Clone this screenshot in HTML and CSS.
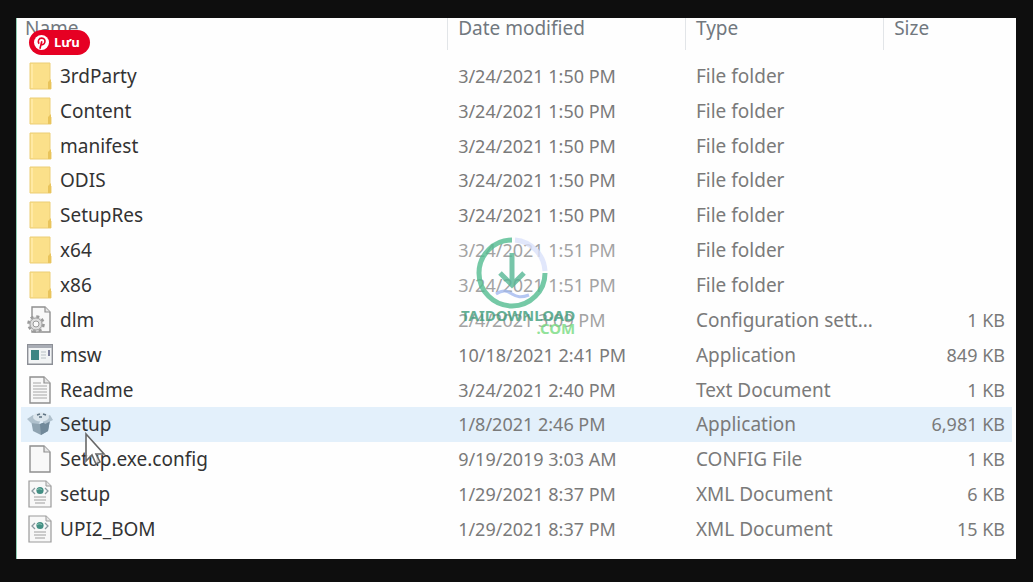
FILE: index.html
```
<!DOCTYPE html>
<html lang="en">
<head>
<meta charset="utf-8">
<title>File list</title>
<link rel="stylesheet" href="styles.css">
</head>
<body>
<svg class="defs" aria-hidden="true">
  <symbol id="folder" viewBox="0 0 26 28">
    <path d="M3 1h20v18l1 1v7H3z" fill="#fbe08a" stroke="#ecce76"/>
    <path d="M21 27v-7l3-3v10z" fill="#e9c45c"/>
    <path d="M4 2h2v24H4z" fill="#ffe9a3"/>
  </symbol>
  <symbol id="page" viewBox="0 0 26 28">
    <path d="M3 1h14l6 6v20H3z" fill="#f8f8f8" stroke="#8f8f8f" stroke-width="1.4"/>
    <path d="M17 1v6h6" fill="#e6e6e6" stroke="#8f8f8f" stroke-width="1.2"/>
  </symbol>
  <symbol id="text" viewBox="0 0 26 28">
    <use href="#page"/>
    <path d="M6 10h14M6 13h14M6 16h14M6 19h14M6 22h14M6 7h8" stroke="#a5a5a5" stroke-width="1.2"/>
  </symbol>
  <symbol id="config" viewBox="0 0 26 28">
    <path d="M5 1h13l5 5v20H5z" fill="#f8f8f8" stroke="#8f8f8f" stroke-width="1.4"/>
    <path d="M18 1v5h5" fill="#e6e6e6" stroke="#8f8f8f" stroke-width="1.2"/>
    <circle cx="9" cy="18" r="7.5" fill="#e2e2e2" stroke="#9a9a9a" stroke-width="2.600" stroke-dasharray="3 2.900"/>
    <circle cx="9" cy="18" r="6" fill="#dedede" stroke="#a2a2a2"/>
    <circle cx="9" cy="18" r="3" fill="#fafafa" stroke="#999"/>
  </symbol>
  <symbol id="app" viewBox="0 0 26 28">
    <path d="M.7 3.700h24.600v19.600H.7z" fill="#f2f4f5" stroke="#8c8f96" stroke-width="1.4"/>
    <path d="M1 4h24v3H1z" fill="#a9adb5"/>
    <path d="M4 9h8v10H4z" fill="#3d8583"/>
    <path d="M14 11h5M14 14h5M14 17h5" stroke="#b8c0c5" stroke-width="1.2"/>
    <path d="M21 9h2v6h-2z" fill="#7d809c"/>
  </symbol>
  <symbol id="setup" viewBox="0 0 26 28">
    <path d="M4 10l9 4 10-4-2 11-7 4-8-4z" fill="#8fa3b1"/>
    <path d="M13 14l10-4-2 11-7 4z" fill="#71899a"/>
    <path d="M0 9l6-4 8 4-2 5-8-1zM14 9l9-4 3 5-8 4z" fill="#b0c1cd"/>
    <ellipse cx="14" cy="7" rx="8" ry="4.500" fill="#dce6ed"/>
    <path d="M10 5l3-1M16 4l3 1M12 7h3" stroke="#5f7484" stroke-width="1.4"/>
  </symbol>
  <symbol id="xml" viewBox="0 0 26 28">
    <path d="M2 1h17l5 5v21H2z" fill="#f8f8f8" stroke="#9a9a9a" stroke-width="1.2"/>
    <path d="M19 1v5h5" fill="#e6e6e6" stroke="#9a9a9a"/>
    <path d="M8 8l-3 3 3 3M18 8l3 3-3 3" fill="none" stroke="#8a9aa0" stroke-width="1.3"/>
    <circle cx="13" cy="10.500" r="3.600" fill="#438f84"/>
    <path d="M10 10c2-2 4-1 5 0" fill="none" stroke="#9bd0bd"/>
    <path d="M7 17h12M7 20h12M8 23h10" stroke="#9d9d9d" stroke-width="1.200"/>
  </symbol>
</svg>

<main class="viewer">
  <div class="panel">
    <table class="files">
      <colgroup><col class="col-name"><col class="col-date"><col class="col-type"><col class="col-size"></colgroup>
      <thead>
        <tr><th scope="col"><span>Name</span></th><th scope="col"><span>Date modified</span></th><th scope="col"><span>Type</span></th><th scope="col"><span>Size</span></th></tr>
      </thead>
      <tbody>
        <tr><td><div class="name"><svg class="icon"><use href="#folder"/></svg>3rdParty</div></td><td>3/24/2021 1:50 PM</td><td>File folder</td><td></td></tr>
        <tr><td><div class="name"><svg class="icon"><use href="#folder"/></svg>Content</div></td><td>3/24/2021 1:50 PM</td><td>File folder</td><td></td></tr>
        <tr><td><div class="name"><svg class="icon"><use href="#folder"/></svg>manifest</div></td><td>3/24/2021 1:50 PM</td><td>File folder</td><td></td></tr>
        <tr><td><div class="name"><svg class="icon"><use href="#folder"/></svg>ODIS</div></td><td>3/24/2021 1:50 PM</td><td>File folder</td><td></td></tr>
        <tr><td><div class="name"><svg class="icon"><use href="#folder"/></svg>SetupRes</div></td><td>3/24/2021 1:50 PM</td><td>File folder</td><td></td></tr>
        <tr><td><div class="name"><svg class="icon"><use href="#folder"/></svg>x64</div></td><td class="faded">3/24/2021 1:51 PM</td><td>File folder</td><td></td></tr>
        <tr><td><div class="name"><svg class="icon"><use href="#folder"/></svg>x86</div></td><td class="faded">3/24/2021 1:51 PM</td><td>File folder</td><td></td></tr>
        <tr><td><div class="name"><svg class="icon"><use href="#config"/></svg>dlm</div></td><td class="faded">2/4/2021 3:09 PM</td><td>Configuration sett...</td><td>1 KB</td></tr>
        <tr><td><div class="name"><svg class="icon"><use href="#app"/></svg>msw</div></td><td>10/18/2021 2:41 PM</td><td>Application</td><td>849 KB</td></tr>
        <tr><td><div class="name"><svg class="icon"><use href="#text"/></svg>Readme</div></td><td>3/24/2021 2:40 PM</td><td>Text Document</td><td>1 KB</td></tr>
        <tr class="selected"><td><div class="name"><svg class="icon"><use href="#setup"/></svg>Setup</div></td><td>1/8/2021 2:46 PM</td><td>Application</td><td>6,981 KB</td></tr>
        <tr><td><div class="name"><svg class="icon"><use href="#page"/></svg>Setup.exe.config</div></td><td>9/19/2019 3:03 AM</td><td>CONFIG File</td><td>1 KB</td></tr>
        <tr><td><div class="name"><svg class="icon"><use href="#xml"/></svg>setup</div></td><td>1/29/2021 8:37 PM</td><td>XML Document</td><td>6 KB</td></tr>
        <tr><td><div class="name"><svg class="icon"><use href="#xml"/></svg>UPI2_BOM</div></td><td>1/29/2021 8:37 PM</td><td>XML Document</td><td>15 KB</td></tr>
      </tbody>
    </table>

    <button class="save" type="button">
      <svg class="save-logo" viewBox="0 0 24 24" aria-hidden="true"><circle cx="12" cy="12" r="12" fill="#fff"/><path d="M9.500 22l3-12M8 14C5.500 10 7.500 5 12.300 5c4.200 0 6 3.200 5 6.800-1 3.900-5 4.700-6.300 2.300" fill="none" stroke="#e60023" stroke-width="2.600"/></svg>
      Lưu
    </button>

    <div class="watermark">
      <svg class="mark" viewBox="0 0 72 72" aria-hidden="true">
        <path d="M36 3a33 33 0 1 0 33 33" fill="none" stroke="#53bd91" stroke-width="5"/>
        <path d="M39 3a33 33 0 0 1 30 31" fill="none" stroke="#dbe2fb" stroke-width="5"/>
        <path d="M36 16v32M24 36l12 12 12-12" fill="none" stroke="#56b795" stroke-width="5"/>
        <path d="M20 57c8-5 11-3 16 0s9 4 17 1" fill="none" stroke="#a3baf0" stroke-width="3"/>
      </svg>
      <span class="brand">TAIDOWNLOAD</span>
      <span class="domain">.COM</span>
    </div>

    <svg class="cursor" viewBox="0 0 22 34" aria-hidden="true"><path d="M2 2v27l6-6 4 9 4-2-4-8h8z" fill="#fff" fill-opacity=".8" stroke="#686868" stroke-width="1.600"/></svg>
  </div>
</main>
</body>
</html>
```
FILE: styles.css
```
* { box-sizing: border-box; }
body {
  margin: 0;
  background: #0e0e0e;
  font-family: "Noto Sans", "Open Sans", sans-serif;
  font-size: 18px;
  line-height: 24px;
}
.defs { position: absolute; width: 0; height: 0; }
.viewer {
  display: flex;
  min-height: 100vh;
  padding: 18px 17px 23px 16px;
}
.panel {
  position: relative;
  flex: 1;
  padding: 0 4px 12px 4px;
  background: #fefefe;
  border-left: 1px solid #8fcdb4;
}
.files {
  width: 100%;
  height: calc(100vh - 53px);
  table-layout: fixed;
  border-collapse: collapse;
  color: #7a7a7a;
}
.col-name { width: 43%; }
.col-date { width: 24%; }
.col-type { width: 20%; }
.col-size { width: 13%; }
th {
  height: 41px;
  padding: 0;
  text-align: left;
  vertical-align: top;
  font-size: 19px;
  font-weight: 400;
  color: #71787f;
}
th span {
  display: block;
  height: 32px;
  padding-left: 10px;
  line-height: 20px;
  border-left: 1px solid #e2e5e8;
}
th:first-child span {
  padding-left: 4px;
  border-left: 0;
}
td { padding: 0 0 1px 11px; white-space: nowrap; }
td:first-child { padding-left: 6px; font-size: 19px; color: #333; }
td:nth-child(3) { font-size: 19px; }
td:last-child { padding-right: 7px; text-align: right; }
td.faded { color: #a3a3a3; }
.selected { background: #e3f0fb; }
.name { display: flex; align-items: center; gap: 7px; }
.icon { flex: none; width: 26px; height: 28px; }
.save {
  position: absolute;
  top: 12px;
  left: 12px;
  display: flex;
  align-items: center;
  gap: 5px;
  height: 25px;
  padding: 0 10px 0 5px;
  border: 0;
  border-radius: 13px;
  background: #e60023;
  color: #fff;
  font: 700 13px/25px "Open Sans", sans-serif;
}
.save-logo { width: 15px; height: 15px; }
.watermark {
  position: absolute;
  top: 219px;
  left: 444px;
  display: flex;
  flex-direction: column;
  opacity: .8;
  font: 700 15px/13px "Noto Sans", sans-serif;
}
.mark { align-self: center; width: 72px; height: 72px; margin-right: 12px; }
.brand { color: #3f9d7c; }
.domain { align-self: flex-end; color: #78dc82; }
.cursor { position: absolute; top: 414px; left: 67px; width: 22px; height: 34px; }
```
